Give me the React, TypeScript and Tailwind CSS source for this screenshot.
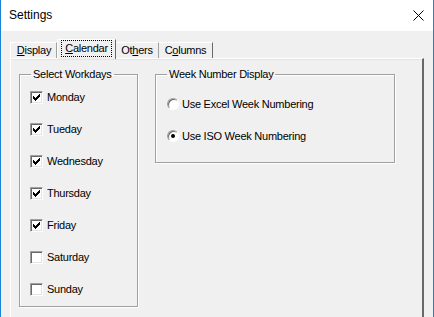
import { useState } from "react";

const days = ["Monday", "Tueday", "Wednesday", "Thursday", "Friday", "Saturday", "Sunday"];

function CheckBox({ checked }: { checked: boolean }) {
  return (
    <span className="flex h-[13px] w-[13px] shrink-0 items-center justify-center border border-t-[#a0a0a0] border-l-[#a0a0a0] border-r-white border-b-white bg-white shadow-[inset_1px_1px_0_#696969,inset_-1px_-1px_0_#e3e3e3]">
      {checked && (
        <svg width="9" height="9" viewBox="0 0 9 9" shapeRendering="crispEdges">
          <path d="M1 3h1v1h1v1h1V4h1V3h1V2h1V1h1v3H7v1H6v1H5v1H4v1H3V7H2V6H1z" fill="#000" />
        </svg>
      )}
    </span>
  );
}

function Radio({ checked }: { checked: boolean }) {
  return (
    <span className="flex h-[12px] w-[12px] shrink-0 items-center justify-center rounded-full border border-t-[#a0a0a0] border-l-[#a0a0a0] border-r-white border-b-white bg-white shadow-[inset_1px_1px_0_#696969]">
      {checked && <span className="h-[4px] w-[4px] rounded-full bg-black" />}
    </span>
  );
}

export default function App() {
  const [checked] = useState([true, true, true, true, true, false, false]);
  const iso = true;

  return (
    <div
      className="flex h-[317px] w-[434px] flex-col overflow-hidden border-x border-[#1883d7] bg-[#f0f0f0] text-[11px] leading-[13px] tracking-[-0.25px] text-black"
      style={{ fontFamily: '"Liberation Sans", Arial, sans-serif' }}
    >
      {/* title bar */}
      <div className="flex h-[31px] shrink-0 items-center justify-between bg-white pl-[8px] pr-[9px]">
        <span className="text-[12px] tracking-normal">Settings</span>
        <svg width="11" height="11" viewBox="0 0 11 11" className="mt-[-1px]">
          <path d="M0.5 0.5L10.5 10.5M10.5 0.5L0.5 10.5" stroke="#000" strokeWidth="1" />
        </svg>
      </div>

      <div className="flex flex-1 flex-col pl-[9px] pr-[9px] pt-[8px]">
        {/* tabs */}
        <div className="flex h-[19px] items-end">
          <div className="flex h-[16px] w-[47px] items-center justify-center border-l border-t border-white border-r border-r-[#a0a0a0] pl-[1px]">
            <span><u className="underline-offset-[1px]">D</u>isplay</span>
          </div>
          <div className="relative z-10 -mb-px flex h-[20px] w-[59px] items-center justify-center border-l border-t border-white border-r border-r-[#696969] bg-[#f0f0f0]">
            <span className="mt-[-2px] border border-dotted border-black px-[3px] py-[1px]">
              <u className="underline-offset-[1px]">C</u>alendar
            </span>
          </div>
          <div className="flex h-[16px] w-[43px] items-center justify-center border-t border-white border-r border-r-[#a0a0a0]">
            <span>Ot<u className="underline-offset-[1px]">h</u>ers</span>
          </div>
          <div className="flex h-[16px] w-[54px] items-center justify-center border-t border-white border-r border-r-[#696969]">
            <span>C<u className="underline-offset-[1px]">o</u>lumns</span>
          </div>
        </div>

        {/* tab page */}
        <div className="flex w-[414px] flex-1 items-start gap-[17px] border-l border-t border-white border-r-2 border-r-[#696969] pl-[8px] pt-[9px] shadow-[inset_0_1px_0_#e3e3e3]">
          <fieldset className="w-[119px] border border-[#a0a0a0] pb-[1px] pl-[10px] shadow-[inset_1px_1px_0_#fff,1px_1px_0_#fff]">
            <legend className="ml-[1px] px-[2px]">Select Workdays</legend>
            {days.map((d, i) => (
              <label key={d} className="flex h-[32px] items-center gap-[4px]">
                <CheckBox checked={checked[i]} />
                <span>{d}</span>
              </label>
            ))}
          </fieldset>

          <fieldset className="w-[240px] border border-[#a0a0a0] pb-[10px] pl-[11px] pt-[7px] shadow-[inset_1px_1px_0_#fff,1px_1px_0_#fff]">
            <legend className="px-[2px]">Week Number Display</legend>
            <label className="flex h-[32px] items-center gap-[3px]">
              <Radio checked={!iso} />
              <span>Use Excel Week Numbering</span>
            </label>
            <label className="flex h-[32px] items-center gap-[3px]">
              <Radio checked={iso} />
              <span>Use ISO Week Numbering</span>
            </label>
          </fieldset>
        </div>
      </div>
    </div>
  );
}
